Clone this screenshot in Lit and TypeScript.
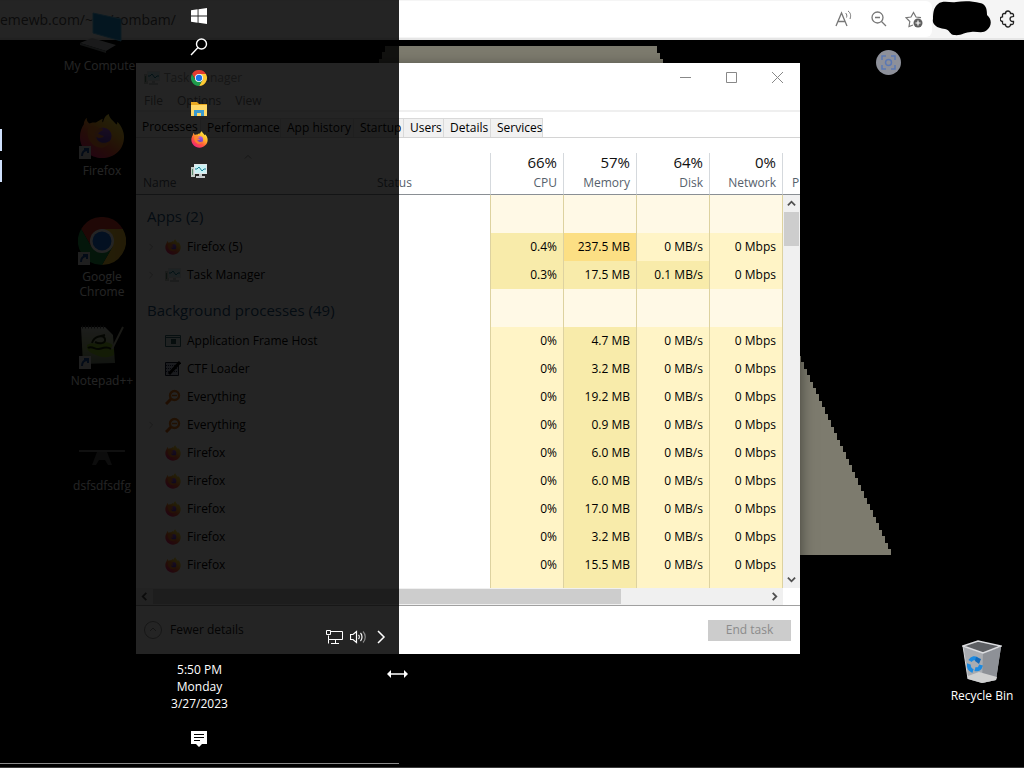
import { LitElement, html, css, svg, nothing } from "lit";
import { customElement } from "lit/decorators.js";
import { classMap } from "lit/directives/class-map.js";

const firefox = (size: number) => html`<svg width=${size} height=${size} viewBox="0 0 48 48" aria-hidden="true">
  <defs>
    <linearGradient id="ff-a" x1="0.85" y1="0.05" x2="0.2" y2="0.95">
      <stop offset="0" stop-color="#fff04a" /><stop offset="0.35" stop-color="#ffb42a" />
      <stop offset="0.65" stop-color="#ff5a3a" /><stop offset="1" stop-color="#f0217e" />
    </linearGradient>
    <linearGradient id="ff-b" x1="0.5" y1="0" x2="0.4" y2="1">
      <stop offset="0" stop-color="#b05be8" /><stop offset="1" stop-color="#5a3cc4" />
    </linearGradient>
  </defs>
  <path fill="url(#ff-a)" d="M31 1c1 5 5 7 8 11 1-1 1-2 1-3 5 5 7 11 7 16 0 13-10 22-23 22S1 37 1 25c0-6 2-10 4-13 0-2 1-5 3-7 0 3 1 5 3 6 2-1 4-1 6-1 2 0 4-3 8-4-1 2-1 3 0 4 1-4 2-7 6-9z" />
  <circle cx="25" cy="24" r="9" fill="url(#ff-b)" />
  <path fill="#ff8a2c" d="M10 15c5-3 9-1 11 1 2 0 4 0 4 1 0 2-4 2-5 5 2 0 3 2 6 2-2 3-6 2-8 1 1 6 9 8 14 4-1 6-8 9-14 6-7-3-11-12-8-20z" opacity=".85" />
</svg>`;

const chrome = (size: number) => html`<svg width=${size} height=${size} viewBox="0 0 48 48" aria-hidden="true">
  <path fill="#e33b2e" d="M3.200 12A24 24 0 0 1 44.800 12L24 12.500 13.600 30z" />
  <path fill="#fcc934" d="M44.800 12A24 24 0 0 1 24 48L34.400 30 34 18 24 12z" />
  <path fill="#1e9a4b" d="M24 48A24 24 0 0 1 3.200 12L13.600 30 24 36 34.400 30z" />
  <circle cx="24" cy="24" r="12" fill="#fff" />
  <circle cx="24" cy="24" r="9.500" fill="#1a73e8" />
</svg>`;

const monitor = (size: number) => html`<svg width=${size} height=${size} viewBox="0 0 16 16" aria-hidden="true">
  <path fill="#c3cbc6" d="M0 4h4v10H0z" /><path fill="#5d8f70" d="M1 6h1v6H1z" />
  <path fill="#dfe5e8" d="M3 1h13v10H3z" /><path fill="#c9f2f5" d="M4 2h11v8H4z" />
  <path fill="none" stroke="#1c8098" d="M4 6h2l2-2 3 4 2-2h2" />
  <path fill="#c5c9cb" d="M8 11h3v2h3v2H5v-2h3z" />
</svg>`;

const magnifier = html`<svg width="16" height="16" viewBox="0 0 16 16" aria-hidden="true">
  <circle cx="9.500" cy="6.500" r="4.500" fill="#fff" stroke="#e57a1a" stroke-width="2.400" />
  <path stroke="#d9660e" stroke-width="3" d="M6 10l-5 5" /><path stroke="#e57a1a" stroke-width="1.500" d="M7 6.500h5" />
</svg>`;

const frameHost = html`<svg width="16" height="16" viewBox="0 0 16 16" aria-hidden="true">
  <path fill="#dfeeee" stroke="#376d70" d="M.5 2.500h15v11H.5z" /><path stroke="#376d70" d="M1 4.500h14" />
  <path fill="#2d5d60" d="M6 6h5v5H6z" />
</svg>`;

const loader = html`<svg width="16" height="16" viewBox="0 0 16 16" aria-hidden="true">
  <path fill="#b8bcd0" stroke="#111830" d="M.5 1.500h13v13H.5z" />
  <path stroke="#252d50" stroke-dasharray="1 1" d="M1 4.500h12M1 7.500h12M1 10.500h12" />
  <path stroke="#000" stroke-width="3" d="M15 1L4 13" />
</svg>`;

const chevron = (d: string, size = 9, width = 2) => html`<svg width=${size} height=${size} viewBox="0 0 10 10" aria-hidden="true">
  <path fill="none" stroke="currentColor" stroke-width=${width} d=${d} /></svg>`;
const UP = "M1 7l4-4 4 4";
const DOWN = "M1 3l4 4 4-4";
const LEFT = "M7 1L3 5l4 4";
const RIGHT = "M3 1l4 4-4 4";

type Row = { icon: unknown; name: string; cpu: string; mem: string; disk: string; open?: boolean };
const bg = (icon: unknown, name: string, mem: string, open = false): Row => ({ icon, name, cpu: "0%", mem, disk: "0 MB/s", open });

const APPS: Row[] = [
  { icon: firefox(16), name: "Firefox (5)", cpu: "0.4%", mem: "237.5 MB", disk: "0 MB/s", open: true },
  { icon: monitor(16), name: "Task Manager", cpu: "0.3%", mem: "17.5 MB", disk: "0.1 MB/s", open: true },
];
const BACKGROUND: Row[] = [
  bg(frameHost, "Application Frame Host", "4.7 MB"),
  bg(loader, "CTF Loader", "3.2 MB"),
  bg(magnifier, "Everything", "19.2 MB"),
  bg(magnifier, "Everything", "0.9 MB", true),
  bg(firefox(16), "Firefox", "6.0 MB"),
  bg(firefox(16), "Firefox", "6.0 MB"),
  bg(firefox(16), "Firefox", "17.0 MB"),
  bg(firefox(16), "Firefox", "3.2 MB"),
  bg(firefox(16), "Firefox", "15.5 MB"),
];

@customElement("task-manager")
class TaskManager extends LitElement {
  static styles = css`
    :host { display: flex; flex-direction: column; background: #fff; color: #000; font-size: 12px; line-height: 16px; box-shadow: 0 4px 14px rgba(0, 0, 0, 0.5); }
    button { font: inherit; color: inherit; background: none; border: 0; padding: 0; }
    svg { display: block; }
    .title { display: flex; align-items: center; height: 29px; padding-left: 8px; gap: 4px; color: #999; }
    .title-text { flex: 1; }
    .controls { display: flex; }
    .control { width: 46px; height: 29px; display: grid; place-items: center; color: #888; }
    .menu { display: flex; gap: 14px; height: 18px; align-items: center; padding-left: 8px; color: #777; border-bottom: 2px solid #efefef; }
    .tabs { display: grid; grid-template-columns: 65px 80px 73px 50px 40px 47px 52px; margin-top: 6px; height: 19px; border-bottom: 1px solid #d4d4d4; }
    .tab { background: #f1f1f1; border-right: 1px solid #d9d9d9; border-top: 1px solid #d9d9d9; text-align: left; padding-left: 6px; white-space: nowrap; }
    .tab.on { background: #fff; border-top: 0; padding-bottom: 2px; }
    .sort { height: 15px; }
    .main { display: flex; }
    table { flex: 1; min-width: 0; border-collapse: separate; border-spacing: 0; table-layout: fixed; }
    th, td { padding: 0 6px 0 0; text-align: right; font-weight: 400; white-space: nowrap; }
    .c-status { width: 113px; }
    .c-num { width: 73px; }
    thead th { height: 42px; color: #56616b; border-bottom: 1px solid #8a8f94; border-left: 1px solid #d5d9dd; vertical-align: bottom; padding-bottom: 3px; box-sizing: border-box; }
    thead th.plain { border-left: 0; text-align: left; }
    thead th.name { padding-left: 7px; }
    .caret { display: flex; padding-left: 101px; margin-bottom: 14px; color: #777; }
    .pct { display: block; font-size: 15px; line-height: 16px; color: #111; margin-bottom: 5px; }
    td { background: #fff4c6; border-left: 1px solid #ddd2a0; height: 28px; }
    tbody th { text-align: left; padding: 0; }
    .warm { background: #f8ebaa; }
    .hot { background: #fcdf84; }
    .group th { height: 38px; padding: 4px 0 0 11px; box-sizing: border-box; font-size: 15px; color: #1d567f; overflow: visible; }
    .group td { height: 38px; background: #fff9e6; }
    .rest td { height: 9px; }
    .proc { display: flex; align-items: center; gap: 6px; padding-left: 11px; }
    .twist { width: 12px; color: #aaa; }
    .side { width: 18px; display: flex; flex-direction: column; }
    .cut { height: 42px; box-sizing: border-box; overflow: hidden; padding: 22px 0 0 9px; color: #56616b; border-left: 1px solid #d5d9dd; border-bottom: 1px solid #8a8f94; }
    .vbar { flex: 1; display: flex; flex-direction: column; align-items: center; background: #f0f0f0; border-left: 1px solid #ddd2a0; color: #505050; }
    .arrow { height: 17px; width: 17px; display: grid; place-items: center; }
    .vthumb { width: 15px; height: 34px; background: #cdcdcd; }
    .space { flex: 1; }
    .hbar { display: flex; align-items: center; height: 17px; margin-right: 17px; background: #f0f0f0; color: #505050; }
    .hthumb { width: 468px; height: 15px; background: #cdcdcd; }
    .foot { display: flex; align-items: center; gap: 8px; border-top: 1px solid #a0a0a0; height: 48px; padding: 0 9px 0 8px; }
    .fewer { display: flex; align-items: center; gap: 8px; color: #222; }
    .end { width: 83px; height: 21px; background: #ccc; color: #8b8b8b; }
  `;

  private row(r: Row) {
    return html`<tr>
      <th colspan="2" scope="row"><div class="proc"><span class="twist">${r.open ? chevron(RIGHT, 8, 1) : nothing}</span>${r.icon}<span>${r.name}</span></div></th>
      <td class=${classMap({ warm: r.cpu !== "0%" })}>${r.cpu}</td>
      <td class=${classMap({ warm: r.mem !== "237.5 MB", hot: r.mem === "237.5 MB" })}>${r.mem}</td>
      <td class=${classMap({ warm: r.disk !== "0 MB/s" })}>${r.disk}</td>
      <td>0 Mbps</td>
    </tr>`;
  }

  private group(label: string) {
    return html`<tr class="group"><th colspan="2" scope="rowgroup">${label}</th><td></td><td></td><td></td><td></td></tr>`;
  }

  render() {
    return html`
      <div class="title">${monitor(16)}<span class="title-text">Task Manager</span>
        <div class="controls">
          <button class="control" aria-label="Minimize"><svg width="11" height="11"><path stroke="currentColor" d="M0 5.500h11" /></svg></button>
          <button class="control" aria-label="Maximize"><svg width="11" height="11"><path fill="none" stroke="currentColor" d="M.5.5h10v10H.5z" /></svg></button>
          <button class="control" aria-label="Close"><svg width="11" height="11"><path stroke="currentColor" d="M0 0l11 11M11 0L0 11" /></svg></button>
        </div>
      </div>
      <div class="menu"><button>File</button><button>Options</button><button>View</button></div>
      <div class="tabs" role="tablist">
        ${["Processes", "Performance", "App history", "Startup", "Users", "Details", "Services"].map(
          (t, i) => html`<button role="tab" class=${classMap({ tab: true, on: i === 0 })}>${t}</button>`)}
      </div>
      <div class="sort"></div>
      <div class="main">
        <table>
          <colgroup><col /><col class="c-status" /><col class="c-num" /><col class="c-num" /><col class="c-num" /><col class="c-num" /></colgroup>
          <thead><tr>
            <th class="plain name"><span class="caret">${chevron(UP, 8, 1)}</span>Name</th><th class="plain">Status</th>
            ${[["66%", "CPU"], ["57%", "Memory"], ["64%", "Disk"], ["0%", "Network"]].map(
              ([p, l]) => html`<th><span class="pct">${p}</span>${l}</th>`)}
          </tr></thead>
          <tbody>
            ${this.group("Apps (2)")}${APPS.map((r) => this.row(r))}
            ${this.group("Background processes (49)")}${BACKGROUND.map((r) => this.row(r))}
            <tr class="rest"><th colspan="2"></th><td></td><td class="warm"></td><td></td><td></td></tr>
          </tbody>
        </table>
        <div class="side">
          <div class="cut">P</div>
          <div class="vbar"><span class="arrow">${chevron(UP)}</span><span class="vthumb"></span><span class="space"></span><span class="arrow">${chevron(DOWN)}</span></div>
        </div>
      </div>
      <div class="hbar"><span class="arrow">${chevron(LEFT)}</span><span class="hthumb"></span><span class="space"></span><span class="arrow">${chevron(RIGHT)}</span></div>
      <div class="foot">
        <button class="fewer"><svg width="18" height="18"><circle cx="9" cy="9" r="8.500" fill="none" stroke="#999" /><path fill="none" stroke="#999" d="M6 10l3-3 3 3" /></svg>Fewer details</button>
        <span class="space"></span>
        <button class="end" disabled>End task</button>
      </div>`;
  }
}

const shortcut = svg`<path fill="#ddd" d="M0 34h12v13H0z" /><path fill="none" stroke="#1a4ea0" stroke-width="2" d="M3 44c0-4 2-6 6-6M5 37h4v4" />`;
const badge = html`<svg class="badge" width="12" height="13" viewBox="0 34 12 13" aria-hidden="true">${shortcut}</svg>`;

const computer = html`<svg width="48" height="44" viewBox="0 0 48 44" aria-hidden="true">
  <path fill="#1f9be0" stroke="#5cc0f0" d="M15 3l28 6v22l-28-8z" />
  <path fill="#b5babd" d="M2 33l12-5 24 7-10 6z" /><path fill="#7d8488" d="M2 33l26 8v2L2 35z" />
</svg>`;

const notepad = html`<svg width="46" height="46" viewBox="0 0 46 46" aria-hidden="true">
  <defs><linearGradient id="np" x1="0" y1="0" x2="0" y2="1"><stop offset="0" stop-color="#c9ccc6" /><stop offset=".6" stop-color="#a9bd80" /><stop offset="1" stop-color="#7c8a78" /></linearGradient></defs>
  <path fill="url(#np)" d="M2 4h24l8 8 2 28-32 1z" /><path fill="none" stroke="#444" stroke-width="3" stroke-dasharray="1 2" d="M3 4h24" />
  <path fill="#8cc42c" d="M8 22c5-4 9 0 14-2s11 0 13 4v8c-8 4-14 2-18 0-5-2-10-4-9-10z" />
  <path fill="none" stroke="#20300f" stroke-width="2" d="M13 20c2-7 12-9 13-4s-6 5-10 3M9 25c4-3 7 2 11 1s8-3 12 0M18 14l8-2" />
  <path stroke="#b9b9a0" stroke-width="2" d="M44 4L33 26" />
</svg>`;

const drone = html`<svg width="46" height="20" viewBox="0 0 46 20" aria-hidden="true">
  <path stroke="#999" stroke-width="1.500" d="M0 5h46" /><path fill="#555" d="M18 6h10l5 13h-4l-3-5h-6l-3 5h-4z" />
</svg>`;

const bin = html`<svg width="40" height="44" viewBox="0 0 40 44" aria-hidden="true">
  <path fill="#a9acb1" d="M1 6l20 7 18-6-5 33-14 3-14-4z" /><path fill="#8e9197" d="M21 13l18-6-5 33-14 3z" />
  <path fill="#5d5f63" stroke="#dcdde0" stroke-width="1.500" d="M1 6l15-5 23 5-18 7z" />
  <path fill="#d0d0d0" d="M6 36l11-4 18 5-1 3-14 3-14-4z" />
  <path fill="none" stroke="#1c8ae0" stroke-width="4" d="M8 21c2-3 5-4 8-1M7 24c-1 3 1 6 4 7M13 29c3 1 5 0 6-4" />
  <path fill="#1469b8" d="M14 17l5 2-2 5-4-3z" />
  <path fill="none" stroke="#d5d7da" d="M1 6l5 33" />
</svg>`;

@customElement("app-root")
class AppRoot extends LitElement {
  static styles = css`
    :host { display: block; font-family: "Open Sans", "Noto Sans", sans-serif; font-size: 12px; line-height: 16px; color: #fff; }
    button { font: inherit; color: inherit; background: none; border: 0; padding: 0; }
    svg { display: block; }
    .screen { position: relative; min-height: 100vh; box-sizing: border-box; background: #000; overflow: hidden; border-bottom: 1px solid #3a3a3a; }
    .browser { height: 40px; box-sizing: border-box; display: flex; align-items: center; background: #f5f5f5; border-bottom: 2px solid #e6e6e6; color: #777; }
    .address { flex: 1; min-width: 0; height: 36px; display: flex; align-items: center; gap: 17px; padding-right: 9px; background: #fff; border-radius: 0 6px 6px 0; }
    .url { flex: 1; width: 0; font: inherit; font-size: 14px; color: #555; border: 0; padding: 2px 0 0; background: none; outline: 0; }
    .marks { display: flex; gap: 8px; align-items: center; padding-right: 8px; }
    .wall { position: absolute; left: 136px; top: 46px; }
    .item { position: absolute; width: 90px; display: flex; flex-direction: column; align-items: center; gap: 4px; text-align: center; line-height: 15px; color: #fff; }
    .art { position: relative; }
    .badge { position: absolute; left: 0; bottom: 0; }
    .computer { left: 57px; top: 10px; }
    .firefox { left: 57px; top: 113px; }
    .chrome { left: 57px; top: 217px; }
    .notepad { left: 57px; top: 323px; }
    .drone { left: 57px; top: 446px; gap: 12px; }
    .bin { right: -3px; bottom: 64px; }
    .window { position: absolute; left: 136px; top: 63px; width: 664px; }
    .capture { position: absolute; right: 123px; top: 50px; width: 25px; height: 25px; border-radius: 50%; background: #8d909a; display: grid; place-items: center; }
    .taskbar { position: absolute; left: 0; top: 0; bottom: 0; width: 399px; box-sizing: border-box; display: flex; flex-direction: column; background: rgba(0, 0, 0, 0.86); }
    .app { position: relative; height: 31px; padding-right: 1px; display: grid; place-items: center; }
    .app.open::before { content: ""; position: absolute; left: 0; top: 5px; width: 2px; height: 22px; background: #cfe0fc; }
    .grow { flex: 1; }
    .tray { display: flex; justify-content: flex-end; align-items: center; gap: 7px; padding-right: 12px; height: 24px; }
    .clock { text-align: center; line-height: 17px; padding-top: 12px; }
    .notes { display: grid; place-items: center; padding: 19px 1px 16px 0; }
    .edge { height: 1px; background: #8a8a8a; margin-bottom: 3px; }
    .cursor { position: absolute; left: 387px; top: 669px; }
  `;

  private wall() {
    let right = "";
    let left = "";
    const steps = 79;
    for (let i = 0; i <= steps; i++) {
      const y = Math.round((i * 509) / steps);
      const x = 521 + i * 3;
      right += `H${x}V${Math.min(y + 7, 509)}`;
      if (i < 8) left = `H${249 - i * 3}V${y}` + left;
    }
    return html`<svg class="wall" width="760" height="509" viewBox="0 0 760 509" aria-hidden="true"><path fill="#7d7b6e" d=${`M249 0${right}H228${left}z`} /></svg>`;
  }

  private item(cls: string, art: unknown, label: unknown, link = false) {
    return html`<div class="item ${cls}"><div class="art">${art}${link ? badge : nothing}</div><span>${label}</span></div>`;
  }

  render() {
    return html`<div class="screen">
      <div class="browser">
        <div class="address">
          <input class="url" aria-label="Address" value="emewb.com/~ds/combam/" />
          <svg width="18" height="18" viewBox="0 0 18 18" fill="none" stroke="currentColor"><path stroke-width="1.300" d="M1 16L6.500 3 12 16M3 11.500h7" /><path d="M10.500 3c1.500 1 1.500 3 1 4.500M13 1c3 2 3 5 2 8" /></svg>
          <svg width="18" height="18" viewBox="0 0 18 18" fill="none" stroke="currentColor" stroke-width="1.300"><circle cx="7.500" cy="7.500" r="5.500" /><path d="M11.500 11.500L16 16M5 7.500h5" /></svg>
          <svg width="18" height="18" viewBox="0 0 18 18" fill="none" stroke="currentColor" stroke-width="1.200"><path d="M8 15l-4 1.500.8-5L1 7.700l5-.7L8.500 2.500 11 7l5 .7" /><circle cx="13" cy="13" r="4.500" fill="#606060" stroke="none" /><path stroke="#fff" d="M13 10.500v5M10.500 13h5" /></svg>
        </div>
        <div class="marks">
          <svg width="60" height="36" viewBox="0 0 60 36"><path d="M6 3c5-4 12-1 18-2 8-1 16-1 24 1 6 1 7 6 7 12 5 4 5 11 0 15-4 4-10 1-16 2-6 0-10 4-17 3-4 0-4-5-9-6C3 27 0 22 1 18c0-7 1-12 5-15z" /></svg>
          <svg width="16" height="18" viewBox="0 0 16 18" fill="none" stroke="#222" stroke-width="1.300"><path d="M13.500 6.500V5q0-1.500-1.500-1.500h-1.500a2.500 2.500 0 0 0-5 0H4Q2.500 3.500 2.500 5v1.800a2.300 2.300 0 0 0 0 4.600V13q0 1.500 1.500 1.500h1.500a2.500 2.500 0 0 0 5 0H12q1.500 0 1.500-1.500v-1.500h-1a2.400 2.400 0 0 1 0-4.900z" /></svg>
        </div>
      </div>
      ${this.wall()}
      ${this.item("computer", computer, "My Computer")}
      ${this.item("firefox", firefox(46), "Firefox", true)}
      ${this.item("chrome", chrome(48), html`Google<br />Chrome`, true)}
      ${this.item("notepad", notepad, "Notepad++", true)}
      ${this.item("drone", drone, "dsfsdfsdfg")}
      ${this.item("bin", bin, "Recycle Bin")}
      <button class="capture" aria-label="Search the screen"><svg width="15" height="15" viewBox="0 0 15 15" fill="none" stroke="#5b78b4" stroke-width="1.500"><path d="M1 5V1h4M10 1h4v4M14 10v4h-4M5 14H1v-4" /><circle cx="7.500" cy="7.500" r="3" /></svg></button>
      <task-manager class="window"></task-manager>
      <div class="taskbar">
        <button class="app" aria-label="Start"><svg width="16" height="16" viewBox="0 0 16 16"><path fill="#fff" d="M0 2.300L6.600 1.300V7.500H0zM7.500 1.200L16 0v7.500H7.500zM0 8.400h6.600v6.300L0 13.700zM7.500 8.400H16V16l-8.500-1.200z" /></svg></button>
        <button class="app" aria-label="Search"><svg width="18" height="18" viewBox="0 0 18 18" fill="none" stroke="#fff" stroke-width="1.400"><circle cx="11.500" cy="6" r="5" /><path d="M8 9.500L1 17" /></svg></button>
        <button class="app" aria-label="Google Chrome">${chrome(16)}</button>
        <button class="app" aria-label="File Explorer"><svg width="16" height="14" viewBox="0 0 16 14"><path fill="#e9a820" d="M0 0h6l2 2h8v3H0z" /><path fill="#ffd868" d="M0 3h16v11H0z" /><path fill="#3c9bd0" d="M3 8h10v6h-3v-3H6v3H3z" /></svg></button>
        <button class="app open" aria-label="Firefox">${firefox(17)}</button>
        <button class="app open" aria-label="Task Manager">${monitor(16)}</button>
        <span class="grow"></span>
        <div class="tray">
          <svg width="17" height="14" viewBox="0 0 17 14" fill="none" stroke="#fff"><path d="M5 1.500h11.500v8H2.500v-4M.5.500h4v4h-4zM9.500 10v3M5 13.500h8M2.500 9.500v4" /></svg>
          <svg width="18" height="14" viewBox="0 0 18 14" fill="none" stroke="#fff" stroke-width="1.200"><path d="M.5 4.500H3l3.500-3v11L3 9.500H.5zM8.500 5c1 1 1 3 0 4M10.500 3c2 2 2 6 0 8" /><path stroke="#888" d="M13 1.500c3 3 3 8 0 11" /></svg>
          <svg width="12" height="14" viewBox="0 0 12 14" fill="none" stroke="#fff" stroke-width="1.500"><path d="M3 1l6 6-6 6" /></svg>
        </div>
        <div class="clock">5:50 PM<br />Monday<br />3/27/2023</div>
        <button class="notes" aria-label="Notifications"><svg width="16" height="16" viewBox="0 0 16 16"><path fill="#fff" d="M0 0h16v13h-5l-3 3-3-3H0z" /><path stroke="#000" d="M3 3.500h10M3 6.500h10M3 9.500h6" /></svg></button>
        <div class="edge"></div>
      </div>
      <svg class="cursor" width="21" height="10" viewBox="0 0 21 10" fill="#fff"><path d="M0 5l4-4v3.300h13V1l4 4-4 4V5.700H4V9z" /></svg>
    </div>`;
  }
}
